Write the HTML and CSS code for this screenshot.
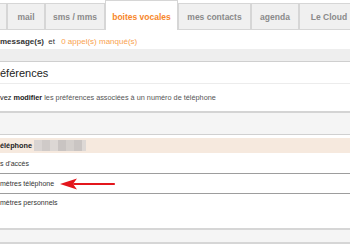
FILE: index.html
```html
<!DOCTYPE html>
<html lang="fr">
<head>
  <meta charset="UTF-8">
  <title>Messagerie vocale</title>
  <link rel="stylesheet" href="styles.css">
</head>
<body>

  <div class="tabs">
    <div class="tab tab-edge"></div>
    <div class="tab tab-mail">mail</div>
    <div class="tab tab-sms">sms / mms</div>
    <div class="tab tab-active">boites vocales</div>
    <div class="tab tab-contacts">mes contacts</div>
    <div class="tab tab-agenda">agenda</div>
    <div class="tab tab-cloud">Le Cloud</div>
  </div>

  <div class="summary">
    <strong>message(s)</strong>
    <span class="sep">et</span>
    <span class="missed">0 appel(s) manqué(s)</span>
  </div>

  <div class="band band-top"></div>

  <div class="title">éférences</div>
  <div class="desc"><span>vez </span><strong>modifier</strong> les préférences associées à un numéro de téléphone</div>

  <div class="band band-mid"></div>

  <div class="line-item line-head">
    <strong>éléphone</strong>
    <span class="masked">
      <i class="m1"></i><i class="m2"></i><i class="m3"></i><i class="m4"></i><i class="m5"></i><i class="m6"></i><i class="m7"></i>
    </span>
  </div>
  <div class="line-item line-codes">s d'accès</div>
  <div class="line-item line-phone">
    <span>mètres téléphone</span>
    <svg class="arrow" width="56" height="12" viewBox="0 0 56 12">
      <path d="M14 6 H54" stroke="#e3161c" stroke-width="2.2" stroke-linecap="round"/>
      <path d="M0 6 L17 0.5 L13 6 L17 11.5 Z" fill="#e3161c"/>
    </svg>
  </div>
  <div class="line-item line-perso">mètres personnels</div>

  <div class="band band-bottom"></div>

</body>
</html>
```

FILE: styles.css
```css
* {
  margin: 0;
  padding: 0;
  box-sizing: border-box;
}

body {
  width: 350px;
  height: 250px;
  overflow: hidden;
  font-family: "Liberation Sans", Arial, sans-serif;
  font-size: 7px;
  color: #333;
  background: #fff;
}

/* tabs */
.tabs {
  display: flex;
  height: 30px;
  overflow: hidden;
}

.tab {
  flex: none;
  margin-top: 3px;
  height: 27px;
  border: 1px solid #d6d6d6;
  background: #f0f0f0;
  color: #8a8a8a;
  font-size: 8.5px;
  font-weight: bold;
  display: flex;
  align-items: center;
  justify-content: center;
}

.tab-edge { width: 7px; border-left: none; }
.tab-mail { width: 38px; }
.tab-sms { width: 60px; }
.tab-contacts { width: 73px; }
.tab-agenda { width: 48px; }
.tab-cloud { width: 60px; }

.tab-active {
  width: 73px;
  margin-top: 0;
  height: 30px;
  border-bottom: none;
  background: #fff;
  color: #f7862a;
  padding-top: 2px;
}

/* summary */
.summary {
  height: 19px;
  padding-top: 7px;
  font-size: 8px;
  color: #333;
}

.summary .sep {
  margin: 0 4px 0 2px;
}

.summary .missed {
  color: #f9a24e;
}

/* bands */
.band {
  background: #f5f5f5;
  border-bottom: 1px solid #cfcfcf;
}

.band-top {
  height: 13px;
  background: #eeeeee;
}

.band-mid {
  height: 24px;
  border-top: 2px solid #d4d4d4;
  border-bottom: 1px solid #d0d0d0;
  margin-bottom: 3px;
}

.band-bottom {
  height: 16px;
  margin-top: 0;
  border-top: 2px solid #d6d6d6;
  border-bottom: 2px solid #d6d6d6;
}

/* preferences */
.title {
  height: 22px;
  padding-top: 5px;
  font-size: 11px;
  color: #222;
  border-bottom: 1px solid #ececec;
}

.desc {
  height: 27px;
  padding-top: 9px;
  font-size: 7.3px;
  color: #555;
}

.desc span,
.desc strong {
  color: #222;
}

.line-item {
  display: flex;
  align-items: center;
  color: #333;
}

.line-head {
  height: 15px;
  background: #f6e9de;
  font-size: 7.3px;
  color: #222;
}

.masked {
  display: flex;
  margin-left: 2px;
  height: 11px;
}

.masked i {
  display: block;
  width: 8px;
  height: 11px;
}

.m1 { background: #d9d4d2; }
.m2 { background: #cfcac8; }
.m3 { background: #dcd7d4; }
.m4 { background: #c9c4c2; }
.m5 { background: #d4cfcc; }
.m6 { background: #cac5c3; }
.m7 { background: #ddd8d5; width: 4px !important; }

.line-codes {
  height: 21px;
  border-bottom: 1px solid #9d9d9d;
}

.line-phone {
  height: 20px;
  border-bottom: 1px solid #9d9d9d;
}

.arrow {
  margin-left: 6px;
}

.line-perso {
  height: 34px;
  align-items: flex-start;
  padding-top: 5px;
}
```
